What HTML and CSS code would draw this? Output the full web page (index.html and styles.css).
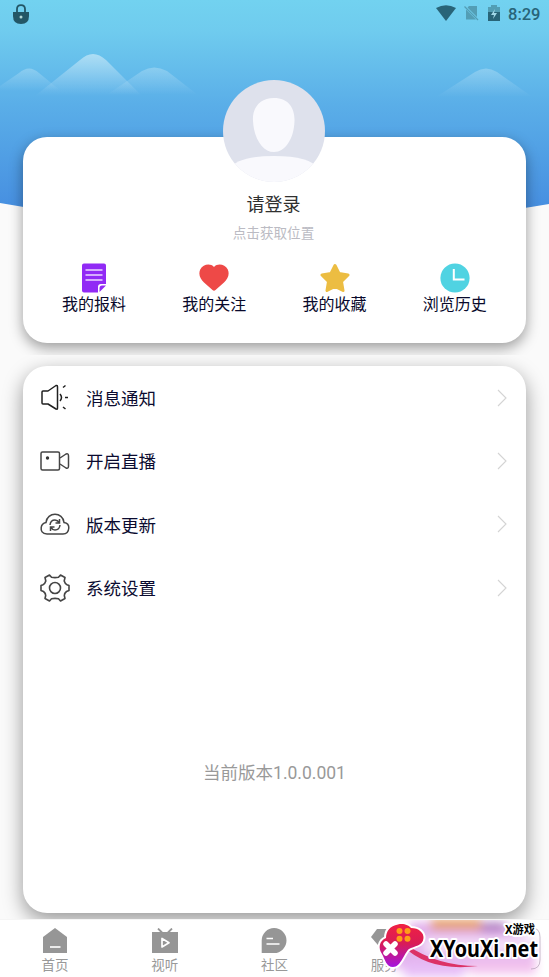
FILE: index.html
```html
<!DOCTYPE html>
<html lang="zh-CN">
<head>
<meta charset="utf-8">
<title>我的</title>
<link rel="stylesheet" href="styles.css">
</head>
<body>
<div class="screen">
  <svg class="scenery" viewBox="0 0 549 215">
    <defs>
      <linearGradient id="sky" x1="0" y1="0" x2="0" y2="1"><stop offset="0" stop-color="#72d2f0"/><stop offset=".14" stop-color="#6fcbee"/><stop offset=".46" stop-color="#5aaee8"/><stop offset="1" stop-color="#4389df"/></linearGradient>
      <linearGradient id="peak" x1="0" y1="0" x2="0" y2="1"><stop offset="0" stop-color="#fff" stop-opacity=".46"/><stop offset="1" stop-color="#fff" stop-opacity="0"/></linearGradient>
      <linearGradient id="hill" x1="0" y1="0" x2="0" y2="1"><stop offset="0" stop-color="#fff" stop-opacity=".25"/><stop offset="1" stop-color="#fff" stop-opacity="0"/></linearGradient>
    </defs>
    <path fill="url(#sky)" d="M0 0H549V204Q410 228 274 228T0 203Z"/>
    <path fill="url(#hill)" d="M0 86L19 73Q29 64 39 73L61 91H0Z"/>
    <path fill="url(#peak)" d="M35 96L80 60Q93 48 106 60L142 96Z"/>
    <path fill="url(#hill)" d="M108 94L142 71Q154 64 167 71L198 95Z"/>
    <path fill="url(#hill)" d="M436 97L475 72Q486 65 497 72L531 96Z"/>
  </svg>
  <header class="status">
    <svg width="16" height="21" viewBox="0 0 16 21"><path d="M4 9V5Q4 1.2 8 1.2T12 5V9" fill="none" stroke="#235666" stroke-width="1.8"/><path d="M0 8H16V12Q16 20 8 20T0 12Z" fill="#235666"/><circle cx="8" cy="13" r="1.500" fill="#b3d7d6"/></svg>
    <div class="status-right">
      <svg width="20" height="17" viewBox="0 0 20 17"><path d="M0 3Q10-2.500 20 3L10 16Z" fill="#286478"/></svg>
      <svg width="15" height="17" viewBox="0 0 15 17"><path d="M5 1H13V12L3.500 2.500Z M2 4.500L12 14.500H2Z" fill="#539eb5"/><path d="M.5 1.500L14 15" stroke="#539eb5" stroke-width="1.300"/></svg>
      <svg width="12" height="17" viewBox="0 0 12 17"><path d="M3 0H9V2H12V7H0V2H3Z" fill="#529eb4"/><path d="M0 7H12V16H0Z" fill="#286478"/><path d="M7 4L3 10H6L5 14L9 8H6Z" fill="#a2d8e8"/></svg>
      <span class="clock">8:29</span>
    </div>
  </header>
  <main class="content">
    <div class="profile-wrap">
    <section class="card profile">
      <svg class="avatar" viewBox="0 0 102 102"><defs><clipPath id="round"><circle cx="51" cy="51" r="51"/></clipPath></defs><g clip-path="url(#round)"><path d="M0 0H102V102H0Z" fill="#dee1ec"/><path d="M51 18C66 18 72 29 71.500 41C71 59 62 72 51 72S31 59 30 41C29 29 36 18 51 18Z" fill="#f9f9fd"/><path d="M6 89Q15 76 51 76T96 89L85 110H17Z" fill="#f9f9fd"/></g></svg>
      <h1 class="login">请登录</h1>
      <p class="location">点击获取位置</p>
      <nav class="shortcuts">
        <a class="shortcut"><svg viewBox="0 0 30 30"><path d="M5 .5H25Q27 .5 27 2.500V21H22Q19 21 19 24V29.500H5Q3 29.500 3 27.500V2.500Q3 .5 5 .5Z" fill="#912af5"/><path d="M20.500 29V25Q20.500 22.500 23 22.500H27Z" fill="#912af5"/><path d="M6.500 7H23.500M6.500 12H23.500M6.500 17H23.500" stroke="#ecd6ff" stroke-width="1.500"/></svg><span>我的报料</span></a>
        <a class="shortcut"><svg viewBox="0 0 30 30"><path d="M15 4C11-.2 4 1.500 1.200 6.500C-1 12 1.500 16 5 19.500L13.500 27Q15 28.400 16.500 27L25 19.500C28.500 16 31 12 28.800 6.500C26 1.500 19 -.2 15 4Z" fill="#ee4947"/></svg><span>我的关注</span></a>
        <a class="shortcut"><svg viewBox="0 0 30 30"><path d="M15 2.500L19 10.500L28 12L21.500 18.500L23 27.500L15 23.500L7 27.500L8.500 18.500L2 12L11 10.500Z" fill="#ecbd42" stroke="#ecbd42" stroke-width="3" stroke-linejoin="round"/></svg><span>我的收藏</span></a>
        <a class="shortcut"><svg viewBox="0 0 30 30"><circle cx="15" cy="15" r="14.600" fill="#50d3e2"/><path d="M13.800 6V16.500H24.500" fill="none" stroke="#fff" stroke-width="2"/></svg><span>浏览历史</span></a>
      </nav>
    </section>
    </div>
    <section class="card menu">
      <a class="row"><svg class="icon" viewBox="0 0 30 30"><g fill="none" stroke="#202020" stroke-width="1.500" stroke-linejoin="round"><path d="M2 9Q2 8 3 8H8L16 2.500Q17.500 2 17.500 4V25Q17.500 27 16 26L8 21H3Q2 21 2 20Z"/><path d="M20 11Q23 14.500 20 18M25 14.500H28M23 4.500L25.500 2.500M23 24L25.500 26"/></g></svg><span>消息通知</span><svg class="arrow" viewBox="0 0 10 18"><path d="M1 1L9 9L1 17"/></svg></a>
      <a class="row"><svg class="icon" viewBox="0 0 30 30"><g fill="none" stroke="#444" stroke-width="1.500" stroke-linejoin="round"><rect x="1" y="6" width="18.500" height="18" rx="1.500"/><path d="M20 12L26 8Q28.500 7 28.500 10V20Q28.500 23 26 22L20 18"/></g><circle cx="7.500" cy="12" r="1.700" fill="#333"/></svg><span>开启直播</span><svg class="arrow" viewBox="0 0 10 18"><path d="M1 1L9 9L1 17"/></svg></a>
      <a class="row"><svg class="icon" viewBox="0 0 30 30"><g fill="none" stroke="#454545" stroke-width="1.500"><path d="M7 25C2 25 .8 21.500 1.200 18.500C1.500 16 3.500 14 6 13.500C7 2.500 23 2.500 24 13.500C27 14 29 16 28.800 19C28.500 23 26 25 23 25Z"/><path d="M10 16Q10.500 11 15 11Q17.500 11 19.500 14M19.500 10V14H15.500M20 16Q19.500 21 15 21Q12.500 21 10.500 18M10.500 22V18H14.500"/></g></svg><span>版本更新</span><svg class="arrow" viewBox="0 0 10 18"><path d="M1 1L9 9L1 17"/></svg></a>
      <a class="row"><svg class="icon" viewBox="0 0 30 30"><g fill="none" stroke="#454545" stroke-width="1.600" stroke-linejoin="round"><path d="M9.500 2L11.500 4.200Q15 5 18.500 4.200L20.500 2L25 4.500L24.200 8Q25 10.800 27 11.700L29 12.500V17.500L26.500 18.500Q24.500 20 24.300 22.500L25 25.500L20.500 28L18.500 25.800Q15 25 11.500 25.800L9.500 28L5 25.500L5.700 22.500Q5.500 20 3.500 18.500L1 17.500V12.500L3 11.700Q5 10.800 5.800 8L5 4.500Z"/><circle cx="15" cy="15" r="5.500"/></g></svg><span>系统设置</span><svg class="arrow" viewBox="0 0 10 18"><path d="M1 1L9 9L1 17"/></svg></a>
      <p class="version">当前版本1.0.0.001</p>
    </section>
  </main>
  <footer class="tabs">
    <a class="tab"><svg viewBox="0 0 26 26"><path d="M13 0L25 9V25H1V9Z" fill="#969696"/><path d="M8 19H18.500" stroke="#fff" stroke-width="1.600"/></svg><span>首页</span></a>
    <a class="tab"><svg viewBox="0 0 26 26"><path d="M0 4H26V25H0Z" fill="#969696"/><path d="M6 .5L10 4.500M20 .5L16 4.500" stroke="#969696" stroke-width="1.800"/><path d="M10 10.500V19L17 14.700Z" fill="none" stroke="#fff" stroke-width="1.700" stroke-linejoin="round"/></svg><span>视听</span></a>
    <a class="tab"><svg viewBox="0 0 26 26"><path d="M.7 25V12.500A12.400 12.500 0 1 1 13 25Z" fill="#969696"/><path d="M5.500 10.500H12M5.500 16H18.500" stroke="#fff" stroke-width="1.700"/></svg><span>社区</span></a>
    <a class="tab"><svg viewBox="0 0 26 26"><path d="M6 1H20L26 9L13 24L0 9Z" fill="#969696"/></svg><span>服务</span></a>
  </footer>
  <svg class="watermark" viewBox="0 0 200 77">
    <defs>
      <filter id="haze" x="-20%" y="-40%" width="140%" height="180%"><feGaussianBlur stdDeviation="5"/></filter>
      <linearGradient id="pad" x1="0" y1="0" x2="0" y2="1"><stop offset="0" stop-color="#f02143"/><stop offset=".45" stop-color="#d91c56"/><stop offset="1" stop-color="#a414df"/></linearGradient>
      <clipPath id="below"><path d="M0 20H200V77H0Z"/></clipPath>
    </defs>
    <g clip-path="url(#below)"><g filter="url(#haze)"><path d="M62 22H150L188 42L184 69H44Z" fill="#e0aaeb" opacity=".9"/><path d="M82 19H132V30H82Z" fill="#e6a06c"/><path d="M132 22H156V32H132Z" fill="#b282c2"/><path d="M120 60H187V74H120Z" fill="#f3c3ee"/><path d="M55 62H115V77H55Z" fill="#e7bdf7"/><path d="M75 38H186V53H75Z" fill="#fff" opacity=".6"/></g></g>
    <path d="M183 28Q191 28 191 37V60Q191 69 182 69" fill="none" stroke="#a894ac" opacity=".6"/>
    <path d="M54 46Q80 72 129 66Q88 66 58 45Z" fill="#dc3267"/>
    <path d="M49 24.500C54 23 60 25 62 28C70 28 75 33 74.500 38C74 46 65 46 60 49C55 53 52 67 44 67C37 67 36 59 33 54C29 48 30 41 37 38C37 31 41 26 49 24.500Z" fill="url(#pad)" stroke="#fff" stroke-width="4" paint-order="stroke"/>
    <path d="M37 44L46 53M46 44L37 53" stroke="#fff" stroke-width="5.500" stroke-linecap="round"/>
    <g fill="#ff9d18"><circle cx="50.500" cy="31" r="3"/><circle cx="58.500" cy="31" r="3"/><circle cx="50.500" cy="38.700" r="3"/><circle cx="58.500" cy="38.700" r="3"/></g>
    <text class="mark-small" x="156" y="33.500" textLength="30" lengthAdjust="spacingAndGlyphs">X游戏</text>
    <text class="mark-large" x="81" y="57" textLength="108" lengthAdjust="spacingAndGlyphs">XYouXi.net</text>
  </svg>
</div>
</body>
</html>
```
FILE: styles.css
```css
* { box-sizing: border-box; }
body { margin: 0; font-family: Roboto, "Noto Sans CJK SC", sans-serif; }
h1, p { margin: 0; }
svg { display: block; flex: none; }
.screen { position: relative; display: flex; flex-direction: column; width: 549px; height: 977px; overflow: hidden; background: #fafafa; }
.scenery { position: absolute; inset: 0 0 auto; width: 549px; height: 215px; }
.status { position: relative; height: 28px; display: flex; justify-content: space-between; padding: 4px 9px 0 13px; }
.status-right { display: flex; align-items: flex-start; gap: 8.500px; padding-top: 1px; }
.clock { color: #286478; font-size: 16.500px; line-height: 19px; font-weight: 500; width: 32px; white-space: nowrap; }
.content { position: relative; height: 891px; flex: none; overflow: hidden; }
.profile-wrap { height: 327px; padding: 109px 23px 0; overflow: hidden; }
.card { background: #fff; border-radius: 24px; box-shadow: 0 5px 14px rgba(0, 0, 0, .38); }
.profile { height: 206px; padding-right: 2px; display: flex; flex-direction: column; align-items: center; }
.avatar { width: 102px; height: 102px; margin-top: -57px; }
.login { margin-top: 8px; font-size: 18px; line-height: 30px; font-weight: 400; color: #303030; }
.location { margin-top: 3px; font-size: 13.600px; line-height: 20px; color: #bbbbc3; }
.shortcuts { align-self: stretch; display: grid; grid-template-columns: repeat(4, 1fr); padding: 0 9px 0 11px; margin-top: 20px; }
.shortcut { display: flex; flex-direction: column; align-items: center; color: #09092b; font-size: 16px; line-height: 24px; white-space: nowrap; }
.shortcut svg { width: 30px; height: 30px; }
.menu { height: 547px; margin: 11px 23px 0; overflow: hidden; box-shadow: 0 7px 20px rgba(0, 0, 0, .4); }
.row { height: 63.300px; display: flex; align-items: center; gap: 16px; padding: 0 19px 0 17px; font-size: 17.500px; color: #0b0b30; }
.icon { width: 30px; height: 30px; }
.arrow { width: 10px; height: 18px; margin-left: auto; fill: none; stroke: #d4d4d4; stroke-width: 1.100; }
.version { margin-top: 140px; text-align: center; font-size: 17.500px; line-height: 28px; color: #999; }
.tabs { position: relative; height: 58px; display: grid; grid-template-columns: repeat(5, 1fr); background: #fff; border-top: 1px solid #f5f5f5; }
.tab { display: flex; flex-direction: column; align-items: center; gap: 1px; padding-top: 8px; color: #999; font-size: 13.500px; line-height: 20px; }
.tab svg { width: 26px; height: 26px; }
.watermark { position: absolute; left: 349px; top: 900px; width: 200px; height: 77px; }
.mark-large, .mark-small { font-family: "Noto Sans", "Noto Sans CJK SC", sans-serif; font-weight: 700; paint-order: stroke; stroke: #fff; stroke-width: 4px; stroke-linejoin: round; fill: #000; }
.mark-large { font-size: 24px; }
.mark-small { font-size: 12px; }
```
